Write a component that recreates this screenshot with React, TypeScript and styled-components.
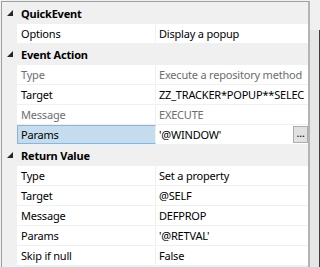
import React from 'react'
import styled, { createGlobalStyle } from 'styled-components'

type Prop = {
  name: string
  value: string
  readOnly?: boolean
  selected?: boolean
  button?: boolean
}

type Category = {
  title: string
  props: Prop[]
}

const categories: Category[] = [
  {
    title: 'QuickEvent',
    props: [{ name: 'Options', value: 'Display a popup' }],
  },
  {
    title: 'Event Action',
    props: [
      { name: 'Type', value: 'Execute a repository method', readOnly: true },
      { name: 'Target', value: 'ZZ_TRACKER*POPUP**SELEC' },
      { name: 'Message', value: 'EXECUTE', readOnly: true },
      { name: 'Params', value: "'@WINDOW'", selected: true, button: true },
    ],
  },
  {
    title: 'Return Value',
    props: [
      { name: 'Type', value: 'Set a property' },
      { name: 'Target', value: '@SELF' },
      { name: 'Message', value: 'DEFPROP' },
      { name: 'Params', value: "'@RETVAL'" },
      { name: 'Skip if null', value: 'False' },
    ],
  },
]

const GlobalStyle = createGlobalStyle`
  body {
    margin: 0;
    background: #f0f0f0;
    font-family: 'Noto Sans', sans-serif;
    font-size: 11px;
    letter-spacing: -0.2px;
    color: #000;
  }
`

export default function App() {
  return (
    <>
      <GlobalStyle />
      <Page>
        <Grid>
          {categories.map(cat => (
            <React.Fragment key={cat.title}>
              <HeaderRow>
                <Gutter>
                  <svg width="6" height="6" viewBox="0 0 6 6">
                    <polygon points="0,6 6,6 6,0" fill="#262626" />
                  </svg>
                </Gutter>
                <HeaderTitle>{cat.title}</HeaderTitle>
              </HeaderRow>
              {cat.props.map(p => (
                <Row key={cat.title + p.name}>
                  <Gutter />
                  <NameCell $selected={p.selected} $muted={p.readOnly}>
                    {p.name}
                  </NameCell>
                  <ValueCell $muted={p.readOnly}>
                    <ValueText>{p.value}</ValueText>
                    {p.button && <EllipsisButton>...</EllipsisButton>}
                  </ValueCell>
                </Row>
              ))}
            </React.Fragment>
          ))}
        </Grid>
        <SideStrip />
      </Page>
    </>
  )
}

const Page = styled.div`
  display: flex;
  width: 320px;
  height: 267px;
  padding: 1px 0 0 1px;
  box-sizing: border-box;
  overflow: hidden;
`

const Grid = styled.div`
  width: 310px;
  box-sizing: border-box;
  border-top: 1px solid #a0a0a0;
  border-left: 1px solid #a0a0a0;
  border-right: 2px solid #b4b4b4;
  background: #f0f0f0;
  display: flex;
  flex-direction: column;
  padding-top: 1px;
`

const SideStrip = styled.div`
  width: 9px;
  margin-top: 29px;
  background: #e6e6e6;
  border-right: 1px solid #3c3c3c;
`

const HeaderRow = styled.div`
  display: flex;
  height: 20px;
  align-items: center;
  border-bottom: 1px solid #f0f0f0;
`

const Gutter = styled.div`
  width: 15px;
  flex: none;
  display: flex;
  align-items: center;
  justify-content: center;
  padding-left: 1px;
  box-sizing: border-box;
  align-self: stretch;
`

const HeaderTitle = styled.div`
  font-weight: bold;
  padding-left: 4px;
`

const Row = styled.div`
  display: flex;
  height: 20px;
  border-bottom: 1px solid #f0f0f0;
  box-sizing: border-box;
`

const NameCell = styled.div<{ $selected?: boolean; $muted?: boolean }>`
  width: 139px;
  flex: none;
  box-sizing: border-box;
  display: flex;
  align-items: center;
  background: ${p => (p.$selected ? '#c4dced' : '#fff')};
  border: 1px solid ${p => (p.$selected ? '#86b8df' : '#fff')};
  border-left-width: ${p => (p.$selected ? '1px' : '0')};
  padding-left: ${p => (p.$selected ? '3px' : '4px')};
  color: ${p => (p.$muted ? '#6d6d6d' : '#000')};
  border-right: 1px solid #f0f0f0;
`

const ValueCell = styled.div<{ $muted?: boolean }>`
  flex: 1;
  min-width: 0;
  display: flex;
  align-items: center;
  background: #fff;
  padding-left: 3px;
  color: ${p => (p.$muted ? '#6d6d6d' : '#000')};
`

const ValueText = styled.span`
  flex: 1;
  white-space: nowrap;
  overflow: hidden;
`

const EllipsisButton = styled.div`
  width: 15px;
  height: 17px;
  flex: none;
  box-sizing: border-box;
  border: 1px solid #adadad;
  background: #e1e1e1;
  font-size: 11px;
  line-height: 12px;
  text-align: center;
  color: #000;
`
